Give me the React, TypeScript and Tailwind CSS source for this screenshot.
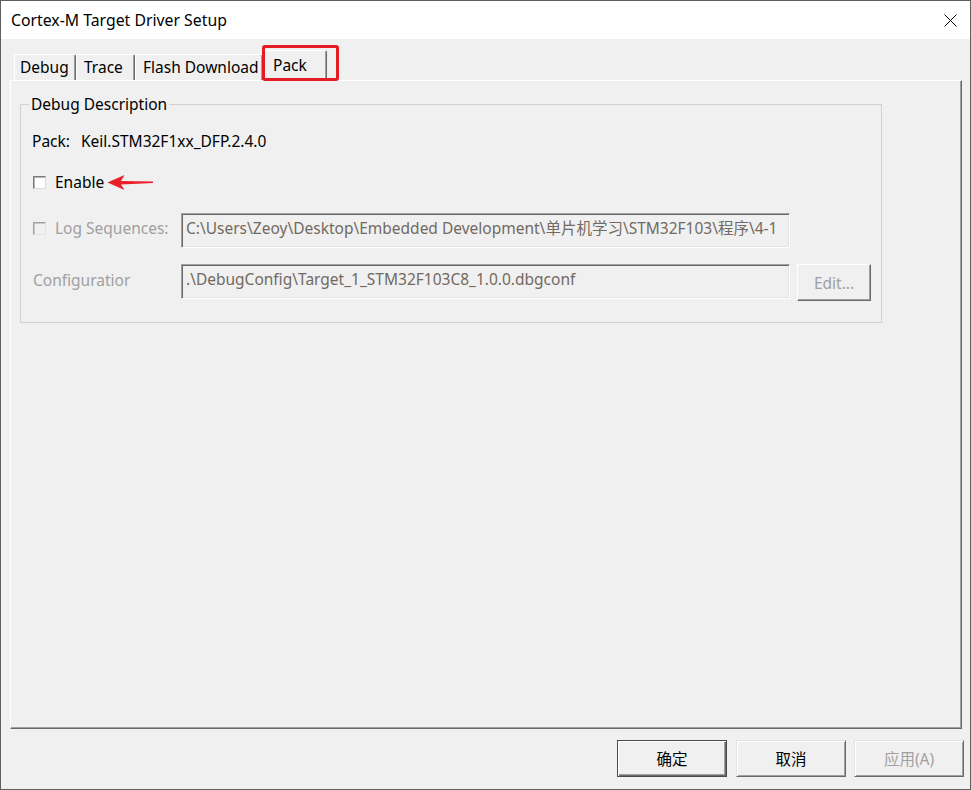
import React from "react";

function Tab({ label, w, pl, selected }: { label: string; w: number; pl: number; selected?: boolean }) {
  if (selected) {
    return (
      <div
        className="relative z-10 -mb-px h-[31px] shrink-0 bg-[#f0f0f0] border-t border-l border-white border-r border-r-[#696969] shadow-[inset_-1px_0_0_#a0a0a0] rounded-t-[2px] flex items-start pt-[4px]"
        style={{ width: w, paddingLeft: pl }}
      >
        <span>{label}</span>
      </div>
    );
  }
  return (
    <div
      className="h-[26px] shrink-0 border-t border-l border-white border-r border-r-[#696969] shadow-[inset_-1px_0_0_#a0a0a0] rounded-t-[2px] flex items-center pb-[1px]"
      style={{ width: w, paddingLeft: pl }}
    >
      <span>{label}</span>
    </div>
  );
}

function Checkbox({ disabled }: { disabled?: boolean }) {
  return (
    <div
      className={
        disabled
          ? "w-[13px] h-[13px] shrink-0 border border-t-[#a0a0a0] border-l-[#a0a0a0] border-r-[#e3e3e3] border-b-[#e3e3e3] bg-[#f0f0f0] shadow-[inset_1px_1px_0_#c8c8c8]"
          : "w-[13px] h-[13px] shrink-0 border border-t-[#7a7a7a] border-l-[#7a7a7a] border-r-[#dcdcdc] border-b-[#dcdcdc] bg-white shadow-[inset_1px_1px_0_#b4b4b4]"
      }
    />
  );
}

export default function App() {
  return (
    <div className="w-[971px] h-[790px] flex flex-col border border-[#5f5f5f] bg-[#f0f0f0] font-['Noto_Sans','Noto_Sans_CJK_SC',sans-serif] text-[15.5px] leading-[20px] text-black overflow-hidden">
      {/* Title bar */}
      <div className="h-[38px] shrink-0 bg-white flex items-center justify-between pl-[10px] pr-[13px]">
        <span className="text-[15.8px]">Cortex-M Target Driver Setup</span>
        <svg width="13" height="13" viewBox="0 0 13 13">
          <path d="M0.5 0.5 L12.5 12.5 M12.5 0.5 L0.5 12.5" stroke="#000" strokeWidth="1" fill="none" />
        </svg>
      </div>

      {/* Main */}
      <div className="shrink-0 flex flex-col pt-[11px] pl-[9px] pr-[8px]">
        <div className="relative h-[30px] flex items-end pl-[4px]">
          <Tab label="Debug" w={62} pl={5} />
          <Tab label="Trace" w={59} pl={7} />
          <Tab label="Flash Download" w={128} pl={7} />
          <Tab label="Pack" w={64} pl={9} selected />
          <div className="absolute left-[252px] top-[-5px] w-[77px] h-[36px] border-[3px] border-[#e51c23] rounded-[3px] z-20" />
        </div>

        <div className="h-[649px] border-t border-l border-white border-r border-b border-r-[#696969] border-b-[#696969] shadow-[inset_-1px_-1px_0_#a0a0a0]">
          <fieldset className="ml-[9px] mt-[13px] w-[862px] border border-[#d0d0d0] pb-[21px]">
            <legend className="ml-[8px] px-[2px] leading-[20px]">Debug Description</legend>

            <div className="mt-[17px] h-[20px] pl-[11px] flex items-center">
              <span>Pack:</span>
              <span className="ml-[11px]">Keil.STM32F1xx_DFP.2.4.0</span>
            </div>

            <div className="mt-[21px] h-[20px] pl-[12px] flex items-center">
              <Checkbox />
              <span className="ml-[9px]">Enable</span>
              <svg className="ml-[3px]" width="47" height="17" viewBox="0 0 47 17">
                <path d="M0.5 8.5 L17.5 1 L14 7 L46 7.6 L46 9 L14 10.4 L17.5 16 Z" fill="#e8202a" />
              </svg>
            </div>

            <div className="mt-[21px] h-[35px] pl-[12px] flex">
              <div className="w-[148px] shrink-0 flex items-center pb-[5px] text-[#a0a0a0]">
                <Checkbox disabled />
                <span className="ml-[9px]">Log Sequences:</span>
              </div>
              <div className="w-[609px] h-[35px] shrink-0 border border-t-[#a0a0a0] border-l-[#a0a0a0] border-r-white border-b-white shadow-[inset_1px_1px_0_#696969,inset_-1px_-1px_0_#e3e3e3] pl-[4px] pt-[4px] overflow-hidden whitespace-nowrap text-[#726a62]">
                C:\Users\Zeoy\Desktop\Embedded Development\单片机学习\STM32F103\程序\4-1
              </div>
            </div>

            <div className="mt-[16px] h-[37px] pl-[12px] flex items-start">
              <div className="w-[148px] h-[35px] shrink-0 flex items-center pb-[3px] text-[#a0a0a0]">
                <span>Configuratior</span>
              </div>
              <div className="w-[609px] h-[35px] shrink-0 border border-t-[#a0a0a0] border-l-[#a0a0a0] border-r-white border-b-white shadow-[inset_1px_1px_0_#696969,inset_-1px_-1px_0_#e3e3e3] pl-[4px] pt-[4px] overflow-hidden whitespace-nowrap text-[#726a62]">
                .\DebugConfig\Target_1_STM32F103C8_1.0.0.dbgconf
              </div>
              <div className="ml-[7px] w-[74px] h-[37px] shrink-0 border border-t-white border-l-white border-r-[#696969] border-b-[#696969] shadow-[inset_-1px_-1px_0_#a0a0a0] flex items-center justify-center text-[#a0a0a0]">
                Edit...
              </div>
            </div>
          </fieldset>
        </div>
      </div>

      {/* Footer */}
      <div className="flex-1 flex items-start justify-end pt-[11px] pr-[6px]">
        <div className="w-[110px] h-[37px] border border-[#4a4a4a] shadow-[inset_1px_1px_0_#ffffff,inset_-1px_-1px_0_#696969,inset_-2px_-2px_0_#a0a0a0] flex items-center justify-center">
          确定
        </div>
        <div className="ml-[9px] w-[110px] h-[37px] border border-t-[#e3e3e3] border-l-[#e3e3e3] border-r-[#696969] border-b-[#696969] shadow-[inset_1px_1px_0_#ffffff,inset_-1px_-1px_0_#a0a0a0] flex items-center justify-center">
          取消
        </div>
        <div className="ml-[8px] w-[110px] h-[37px] border border-t-[#e3e3e3] border-l-[#e3e3e3] border-r-[#696969] border-b-[#696969] shadow-[inset_1px_1px_0_#ffffff,inset_-1px_-1px_0_#a0a0a0] flex items-center justify-center text-[#a0a0a0]">
          应用(A)
        </div>
      </div>
    </div>
  );
}
